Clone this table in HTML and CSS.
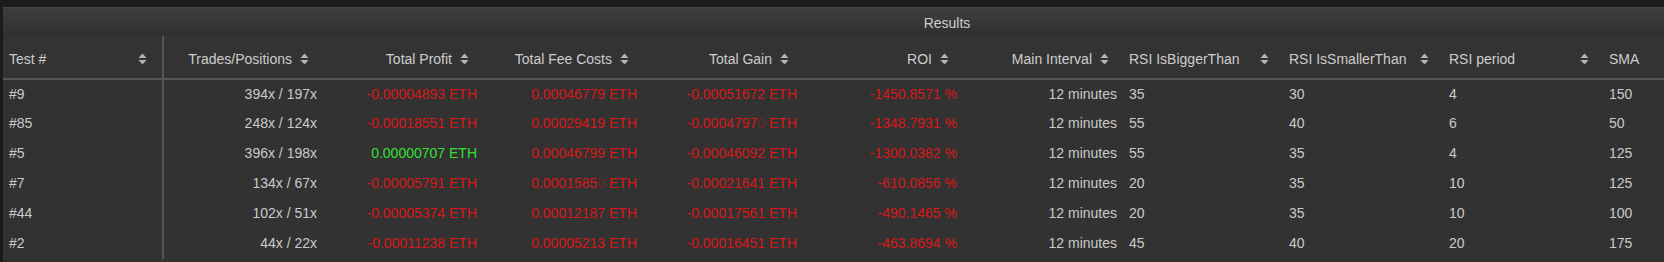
FILE: index.html
```html
<!DOCTYPE html>
<html>
<head>
<meta charset="utf-8">
<link rel="stylesheet" href="styles.css">
</head>
<body>
<div class="panel">
  <div class="inner">
    <div class="caption">Results</div>
    <table class="results">
      <colgroup>
        <col class="c-first"><col class="c"><col class="c"><col class="c"><col class="c"><col class="c"><col class="c"><col class="c"><col class="c"><col class="c"><col class="c-last">
      </colgroup>
      <thead>
        <tr>
          <th class="first left"><span class="th-in"><span>Test #</span><svg class="sort" viewBox="0 0 9 12"><path d="M4.5 0.5L8.5 5H0.5Z"/><path d="M0.5 7H8.5L4.5 11.5Z"/></svg></span></th>
          <th class="right"><span class="th-in"><span>Trades/Positions</span><svg class="sort" viewBox="0 0 9 12"><path d="M4.5 0.5L8.5 5H0.5Z"/><path d="M0.5 7H8.5L4.5 11.5Z"/></svg></span></th>
          <th class="right"><span class="th-in"><span>Total Profit</span><svg class="sort" viewBox="0 0 9 12"><path d="M4.5 0.5L8.5 5H0.5Z"/><path d="M0.5 7H8.5L4.5 11.5Z"/></svg></span></th>
          <th class="right"><span class="th-in"><span>Total Fee Costs</span><svg class="sort" viewBox="0 0 9 12"><path d="M4.5 0.5L8.5 5H0.5Z"/><path d="M0.5 7H8.5L4.5 11.5Z"/></svg></span></th>
          <th class="right"><span class="th-in"><span>Total Gain</span><svg class="sort" viewBox="0 0 9 12"><path d="M4.5 0.5L8.5 5H0.5Z"/><path d="M0.5 7H8.5L4.5 11.5Z"/></svg></span></th>
          <th class="right"><span class="th-in"><span>ROI</span><svg class="sort" viewBox="0 0 9 12"><path d="M4.5 0.5L8.5 5H0.5Z"/><path d="M0.5 7H8.5L4.5 11.5Z"/></svg></span></th>
          <th class="right"><span class="th-in"><span>Main Interval</span><svg class="sort" viewBox="0 0 9 12"><path d="M4.5 0.5L8.5 5H0.5Z"/><path d="M0.5 7H8.5L4.5 11.5Z"/></svg></span></th>
          <th class="left"><span class="th-in"><span>RSI IsBiggerThan</span><svg class="sort" viewBox="0 0 9 12"><path d="M4.5 0.5L8.5 5H0.5Z"/><path d="M0.5 7H8.5L4.5 11.5Z"/></svg></span></th>
          <th class="left"><span class="th-in"><span>RSI IsSmallerThan</span><svg class="sort" viewBox="0 0 9 12"><path d="M4.5 0.5L8.5 5H0.5Z"/><path d="M0.5 7H8.5L4.5 11.5Z"/></svg></span></th>
          <th class="left"><span class="th-in"><span>RSI period</span><svg class="sort" viewBox="0 0 9 12"><path d="M4.5 0.5L8.5 5H0.5Z"/><path d="M0.5 7H8.5L4.5 11.5Z"/></svg></span></th>
          <th class="left"><span class="th-in"><span>SMA</span><svg class="sort" viewBox="0 0 9 12"><path d="M4.5 0.5L8.5 5H0.5Z"/><path d="M0.5 7H8.5L4.5 11.5Z"/></svg></span></th>
        </tr>
      </thead>
      <tbody>
        <tr>
          <td class="first">#9</td><td class="num">394x / 197x</td><td class="num neg">-0.00004893 ETH</td><td class="num neg">0.00046779 ETH</td><td class="num neg">-0.00051672 ETH</td><td class="num neg">-1450.8571 %</td><td class="num">12 minutes</td><td>35</td><td>30</td><td>4</td><td>150</td>
        </tr>
        <tr>
          <td class="first">#85</td><td class="num">248x / 124x</td><td class="num neg">-0.00018551 ETH</td><td class="num neg">0.00029419 ETH</td><td class="num neg">-0.0004797<span class="fade">0</span> ETH</td><td class="num neg">-1348.7931 %</td><td class="num">12 minutes</td><td>55</td><td>40</td><td>6</td><td>50</td>
        </tr>
        <tr>
          <td class="first">#5</td><td class="num">396x / 198x</td><td class="num pos">0.00000707 ETH</td><td class="num neg">0.00046799 ETH</td><td class="num neg">-0.00046092 ETH</td><td class="num neg">-1300.0382 %</td><td class="num">12 minutes</td><td>55</td><td>35</td><td>4</td><td>125</td>
        </tr>
        <tr>
          <td class="first">#7</td><td class="num">134x / 67x</td><td class="num neg">-0.00005791 ETH</td><td class="num neg">0.0001585<span class="fade">0</span> ETH</td><td class="num neg">-0.00021641 ETH</td><td class="num neg">-610.0856 %</td><td class="num">12 minutes</td><td>20</td><td>35</td><td>10</td><td>125</td>
        </tr>
        <tr>
          <td class="first">#44</td><td class="num">102x / 51x</td><td class="num neg">-0.00005374 ETH</td><td class="num neg">0.00012187 ETH</td><td class="num neg">-0.00017561 ETH</td><td class="num neg">-490.1465 %</td><td class="num">12 minutes</td><td>20</td><td>35</td><td>10</td><td>100</td>
        </tr>
        <tr>
          <td class="first">#2</td><td class="num">44x / 22x</td><td class="num neg">-0.00011238 ETH</td><td class="num neg">0.00005213 ETH</td><td class="num neg">-0.00016451 ETH</td><td class="num neg">-463.8694 %</td><td class="num">12 minutes</td><td>45</td><td>40</td><td>20</td><td>175</td>
        </tr>
      </tbody>
    </table>
  </div>
</div>
</body>
</html>
```
FILE: styles.css
```css
html, body {
  margin: 0;
  padding: 0;
  background: #1b1b1b;
  height: 100%;
  overflow: hidden;
}

body {
  padding: 7px 0 0 3px;
  font-family: "Liberation Sans", Arial, sans-serif;
  font-size: 14px;
  color: #c8c8c8;
}

.panel {
  overflow: hidden;
  background: #323232;
  height: 255px;
  border-top: 1px solid #444;
}

.inner {
  width: 1888px;
}

.caption {
  height: 28px;
  line-height: 30px;
  text-align: center;
  color: #cdcdcd;
  background: linear-gradient(#3e3e3e, #2f2f2f);
}

.results {
  width: 1888px;
  table-layout: fixed;
  border-collapse: collapse;
  border-spacing: 0;
}

.c-first { width: 160px; }
.c { width: 160px; }
.c-last { width: 288px; }

.results th {
  height: 42px;
  padding: 0;
  font-weight: normal;
  color: #cdcdcd;
  background: #333333;
  border-bottom: 2px solid #555555;
  white-space: nowrap;
}

.th-in {
  display: flex;
  align-items: center;
  height: 42px;
  box-sizing: border-box;
  padding: 3px 14px 0 6px;
}

th.right .th-in {
  justify-content: flex-end;
  gap: 8px;
}

th.left .th-in {
  justify-content: space-between;
}

.sort {
  width: 9px;
  height: 12px;
  flex: none;
  fill: #b3b3b3;
}

.results tbody tr {
  height: 30px;
}

.results td {
  padding: 0 6px 2px;
  line-height: 16px;
  white-space: nowrap;
  background: #323232;
  color: #cacaca;
}

.results .first {
  border-right: 2px solid #555555;
}

th.first .th-in {
  padding-right: 15px;
}

td.num {
  text-align: right;
}

.results td.neg {
  color: #d81818;
}

.results td.pos {
  color: #33e033;
}

.fade {
  color: #6a2a2a;
}
```
